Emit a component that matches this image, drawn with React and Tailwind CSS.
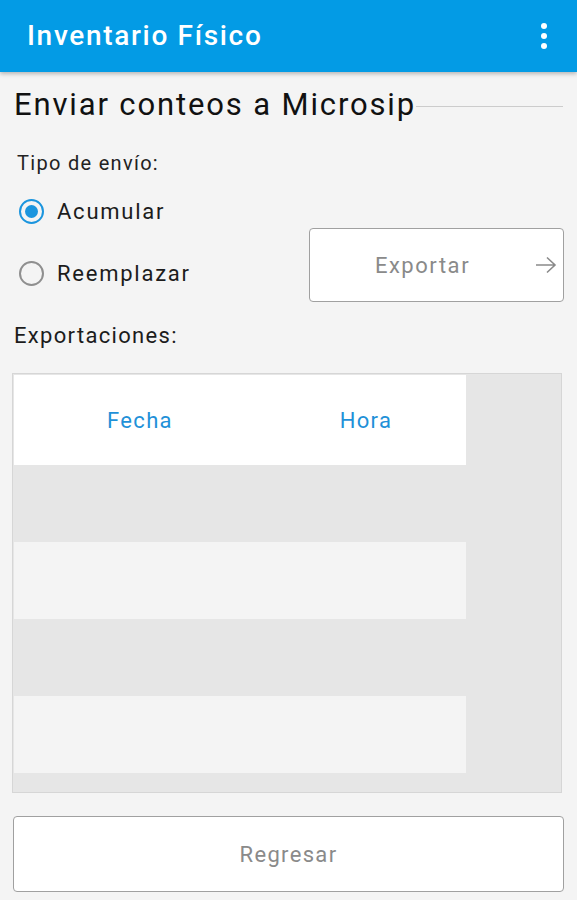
import React from "react";

const rows = ["grey", "light", "grey", "light"];

function Radio({ checked, label }) {
  return (
    <label className="flex h-[62px] items-center gap-[13px] pl-[19px]">
      <span
        className={
          checked
            ? "flex h-[25px] w-[25px] items-center justify-center rounded-full border-2 border-[#1b95de]"
            : "flex h-[25px] w-[25px] items-center justify-center rounded-full border-2 border-[#8f8f8f]"
        }
      >
        {checked && <span className="h-[13px] w-[13px] rounded-full bg-[#1b95de]" />}
      </span>
      <span className="text-[22px] tracking-[0.08em] text-[#1c1c1c]">{label}</span>
    </label>
  );
}

export default function App() {
  return (
    <div
      className="min-h-[900px] w-[577px] bg-[#f4f4f4]"
      style={{ fontFamily: "Roboto, 'Liberation Sans', sans-serif" }}
    >
      <header className="flex h-[72px] items-center justify-between bg-[#039be5] pl-[27px] pr-[30px] shadow-[0_2px_4px_rgba(0,0,0,0.25)]">
        <h1 className="text-[28px] font-medium tracking-[0.06em] text-white">Inventario Físico</h1>
        <div className="flex flex-col gap-[4px]">
          <span className="h-[6px] w-[6px] rounded-full bg-white" />
          <span className="h-[6px] w-[6px] rounded-full bg-white" />
          <span className="h-[6px] w-[6px] rounded-full bg-white" />
        </div>
      </header>

      <div className="mt-[15px] flex items-center pl-[14px] pr-[14px]">
        <h2 className="h-[36px] text-[31px] leading-[36px] tracking-[0.06em] text-[#111]">
          Enviar conteos a Microsip
        </h2>
        <div className="mt-[3px] h-px flex-1 bg-[#cccccc]" />
      </div>

      <p className="mt-[27px] pl-[17px] text-[20px] leading-[26px] tracking-[0.065em] text-[#222]">
        Tipo de envío:
      </p>

      <div className="mt-[4px] flex items-start">
        <div className="flex w-[309px] flex-col">
          <Radio checked label="Acumular" />
          <Radio label="Reemplazar" />
        </div>
        <button className="mt-[48px] flex h-[74px] w-[255px] items-center rounded-[4px] border border-[#a0a0a0] bg-white">
          <span className="flex-1 text-center text-[22px] tracking-[0.07em] text-[#8a8a8a]">Exportar</span>
          <svg
            width="22"
            height="18"
            viewBox="0 0 22 18"
            fill="none"
            stroke="#8a8a8a"
            strokeWidth="1.6"
            className="mr-[6px]"
          >
            <path d="M1 9h19M12 1.5 20 9l-8 7.5" />
          </svg>
        </button>
      </div>

      <p className="mt-[18px] pl-[14px] text-[22px] leading-[28px] tracking-[0.06em] text-[#1c1c1c]">
        Exportaciones:
      </p>

      <div className="ml-[12px] mt-[23px] h-[420px] w-[550px] border border-[#d6d6d6] bg-[#e6e6e6] p-px">
        <div className="grid h-[90px] w-[452px] grid-cols-[252px_200px] items-center bg-white text-[22px] tracking-[0.06em] text-[#1f91d8]">
          <span className="text-center">Fecha</span>
          <span className="text-center">Hora</span>
        </div>
        {rows.map((r, i) => (
          <div
            key={i}
            className={r === "light" ? "h-[77px] w-[452px] bg-[#f4f4f4]" : "h-[77px] w-[452px]"}
          />
        ))}
      </div>

      <button className="ml-[13px] mt-[23px] flex h-[76px] w-[551px] items-center justify-center rounded-[4px] border border-[#a0a0a0] bg-white text-[22px] tracking-[0.06em] text-[#8a8a8a]">
        Regresar
      </button>
    </div>
  );
}
